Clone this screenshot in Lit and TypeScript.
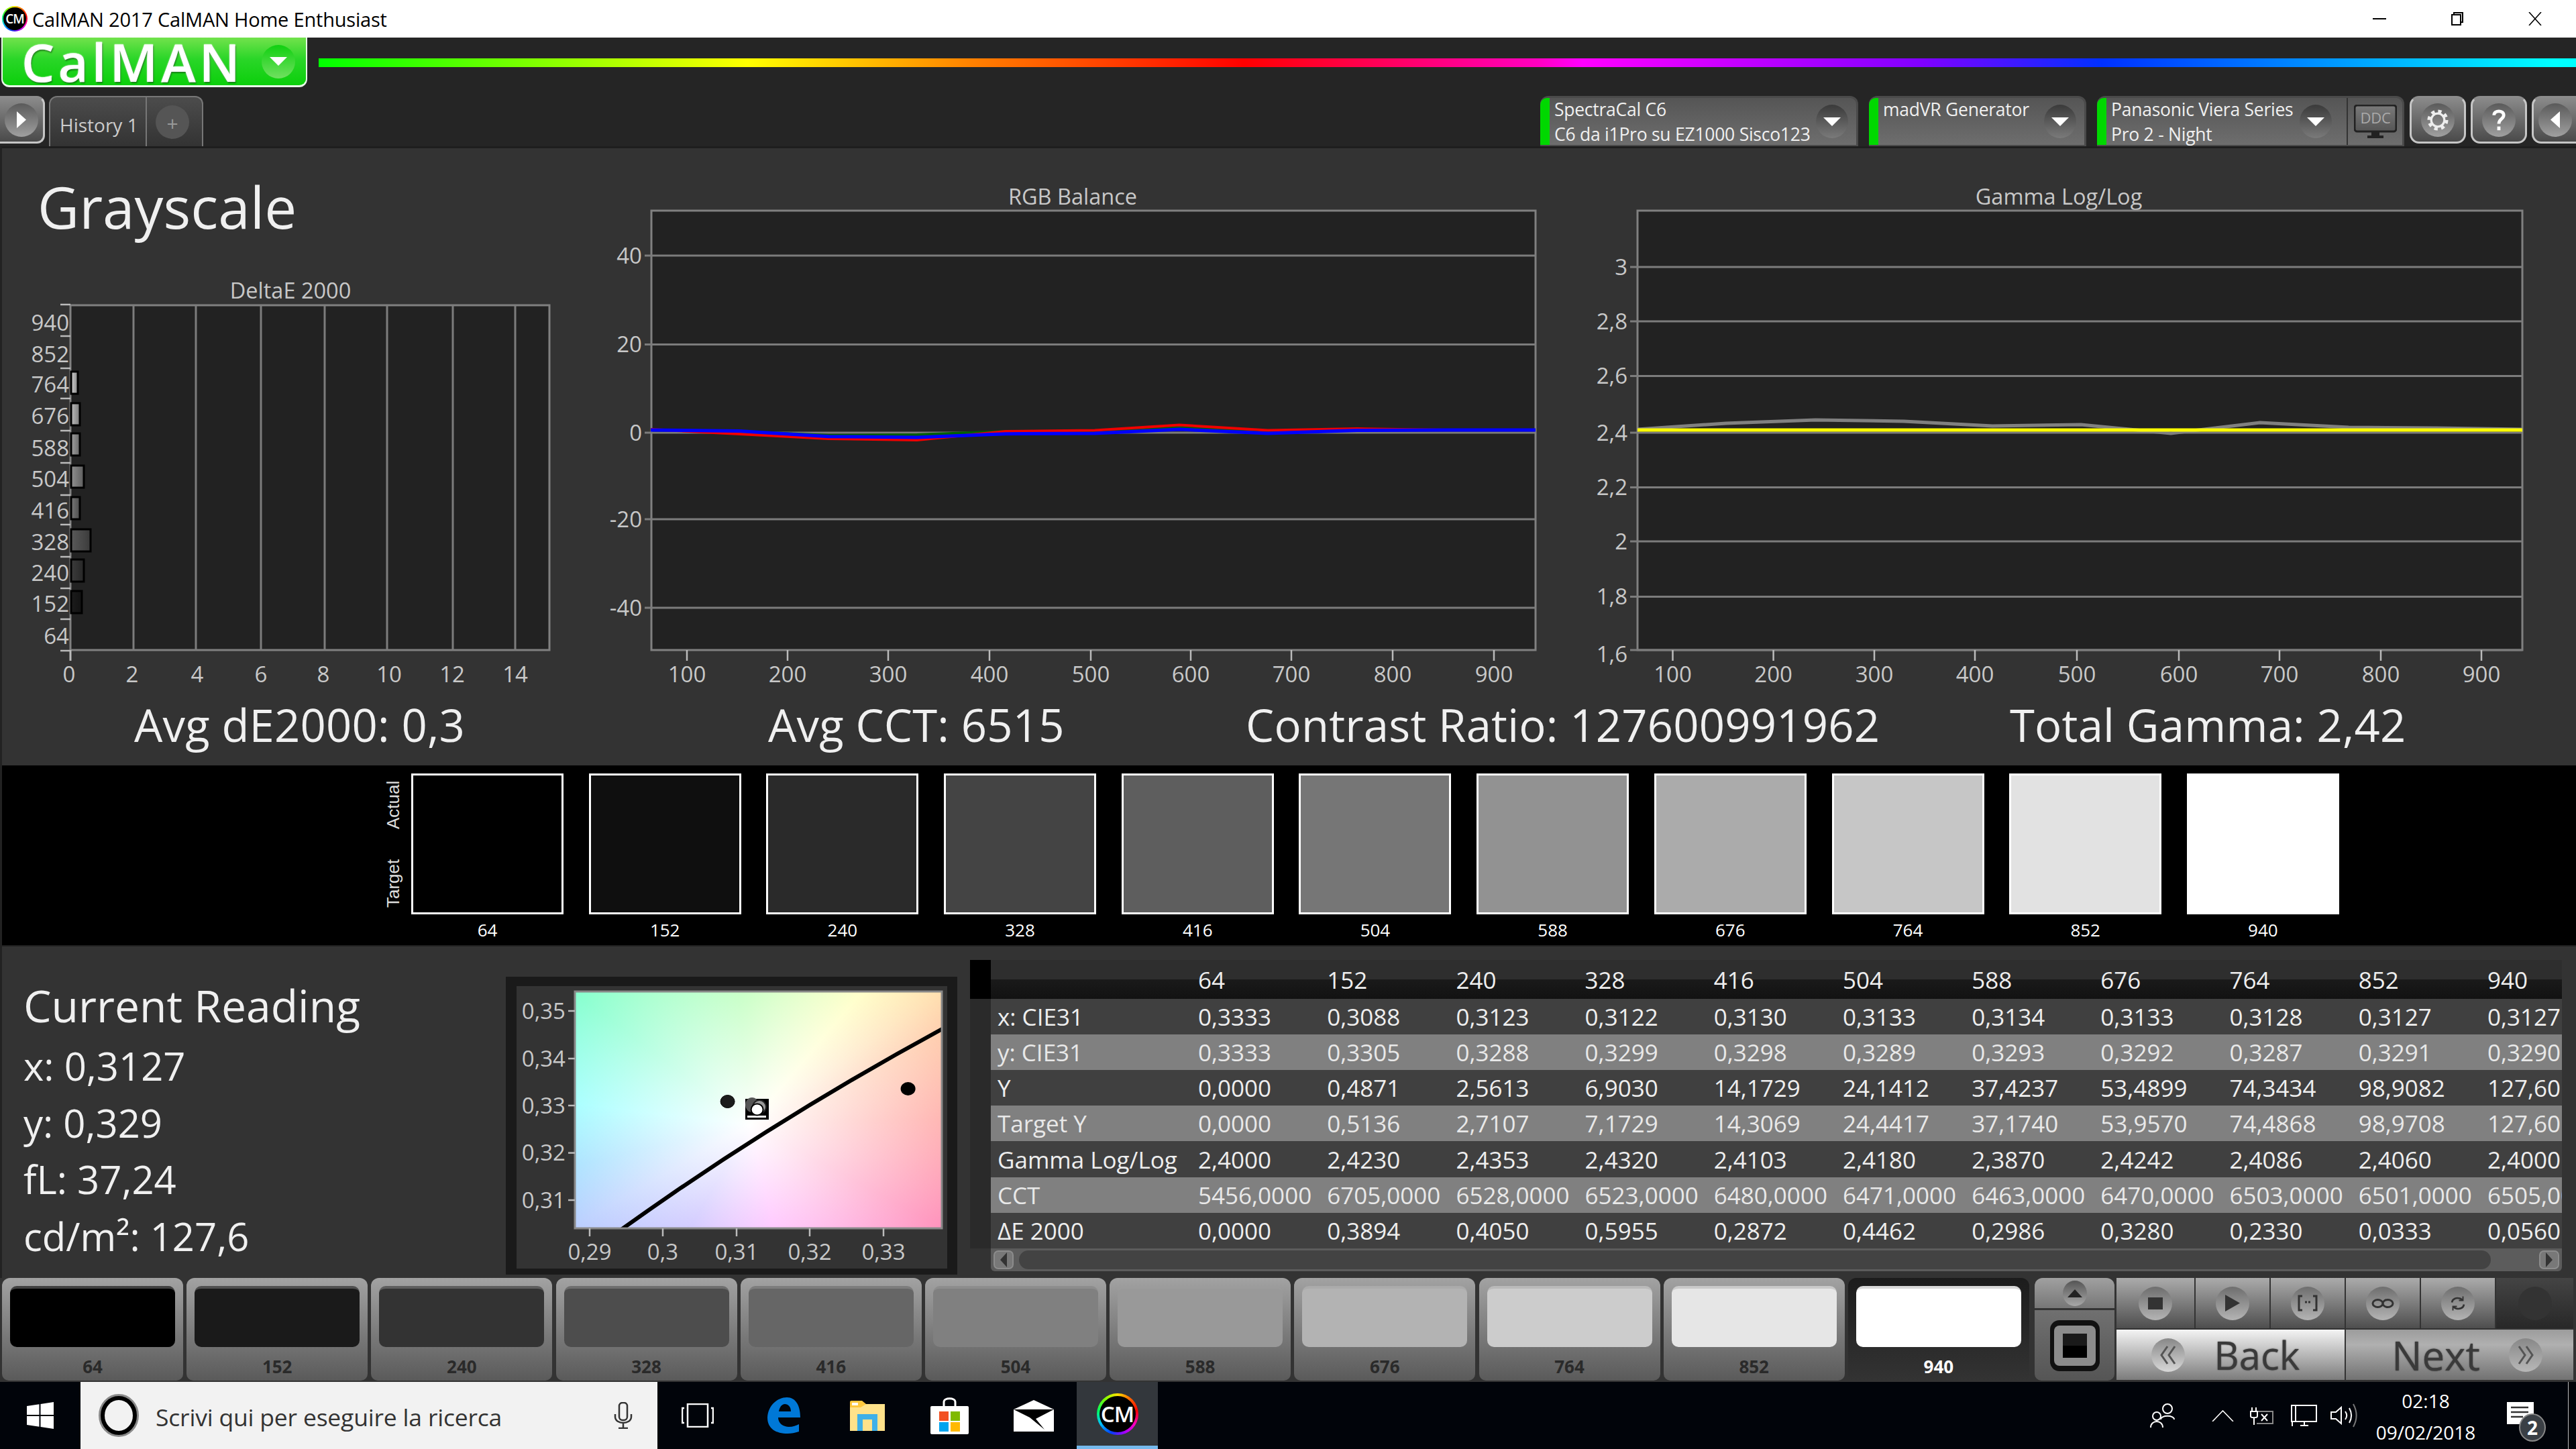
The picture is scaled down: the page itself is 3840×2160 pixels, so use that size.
import { LitElement, html, svg, css } from "lit";
import { customElement } from "lit/decorators.js";

const COLS = ["64","152","240","328","416","504","588","676","764","852","940"];
const SW_ACT = ["#000","#0f0f0f","#2a2a2a","#444","#5e5e5e","#767676","#929292","#ababab","#c6c6c6","#e2e2e2","#fff"];
const BTN_FILL = ["#000","#1a1a1a","#333","#4d4d4d","#666","#808080","#999","#b3b3b3","#ccc","#e6e6e6","#fff"];
const ROWS: [string, string[]][] = [
  ["x: CIE31",["0,3333","0,3088","0,3123","0,3122","0,3130","0,3133","0,3134","0,3133","0,3128","0,3127","0,3127"]],
  ["y: CIE31",["0,3333","0,3305","0,3288","0,3299","0,3298","0,3289","0,3293","0,3292","0,3287","0,3291","0,3290"]],
  ["Y",["0,0000","0,4871","2,5613","6,9030","14,1729","24,1412","37,4237","53,4899","74,3434","98,9082","127,60"]],
  ["Target Y",["0,0000","0,5136","2,7107","7,1729","14,3069","24,4417","37,1740","53,9570","74,4868","98,9708","127,60"]],
  ["Gamma Log/Log",["2,4000","2,4230","2,4353","2,4320","2,4103","2,4180","2,3870","2,4242","2,4086","2,4060","2,4000"]],
  ["CCT",["5456,0000","6705,0000","6528,0000","6523,0000","6480,0000","6471,0000","6463,0000","6470,0000","6503,0000","6501,0000","6505,0000"]],
  ["ΔE 2000",["0,0000","0,3894","0,4050","0,5955","0,2872","0,4462","0,2986","0,3280","0,2330","0,0333","0,0560"]],
];
const XS_BAL = [970,1102,1235,1367,1499,1632,1758,1890,2023,2155,2289];
const XS_GAM = [2441,2573,2706,2838,2970,3102,3236,3369,3501,3632,3760];
const poly = (xs:number[], ys:number[]) => xs.map((x,i)=>`${x},${ys[i]}`).join(" ");

const triDown = (w=26,h=13,c="#fff") => html`<svg class="ico" width=${w} height=${h} viewBox="0 0 26 13" preserveAspectRatio="none"><polygon points="0,0 26,0 13,13" fill=${c}/></svg>`;

@customElement("cm-logo")
class CmLogo extends LitElement {
  static styles = css`
    :host { display:flex; align-items:center; justify-content:center; width:var(--s,38px); height:var(--s,38px); border-radius:50%;
      background:conic-gradient(#ffe000,#ff6000,#ff0000,#ff00c0,#a000ff,#0040ff,#00c0ff,#00ff60,#80ff00,#ffe000); }
    .in { width:calc(100% - var(--r,4px)); height:calc(100% - var(--r,4px)); border-radius:50%; background:#000; color:#fff;
      display:flex; align-items:center; justify-content:center; font:600 var(--f,19px) "Open Sans",sans-serif; letter-spacing:-1px; }
  `;
  render(){ return html`<div class="in">CM</div>`; }
}

@customElement("app-root")
class AppRoot extends LitElement {
  static styles = css`
    :host { display:block; width:3840px; height:2160px; overflow:hidden; background:#252525; font-family:"Open Sans","Noto Sans",sans-serif; }
    * { box-sizing:border-box; }
    .ico { display:block; flex:none; }
    .page { display:flex; flex-direction:column; width:3840px; height:2160px; }

    .title { height:56px; background:#fff; display:flex; align-items:center; flex:none; padding-left:3px; color:#000; --s:38px; }
    .title .t { margin-left:7px; font-size:29px; letter-spacing:-.2px; white-space:nowrap; }
    .winctl { margin-left:auto; display:flex; align-items:center; gap:97px; padding-right:51px; }

    .head { height:162px; flex:none; background:#252525; display:flex; flex-direction:column; }
    .brandrow { display:flex; align-items:center; height:74px; padding-left:2px; }
    .brand { width:456px; height:74px; border:solid #e8f8e8; border-width:0 2px 3px 2px; border-radius:0 0 12px 12px;
      background:linear-gradient(#72e24c,#2ad628 45%,#0bcf0b); display:flex; align-items:center; padding-left:28px; }
    .brand .n { color:#fff; font-weight:600; font-size:78px; letter-spacing:5px; height:70px; line-height:70px; text-shadow:1px 2px 2px rgba(0,70,0,.6), 0 0 2px #fff; width:358px; flex:none; white-space:nowrap; }
    .brand .o { width:50px; height:50px; flex:none; border-radius:50%; background:linear-gradient(#10d010,#70e060); display:flex; align-items:center; justify-content:center; }
    .rainbow { margin-left:17px; flex:1; height:13px;
      background:linear-gradient(90deg,#00ff00 0,#ffff00 19%,#ff8000 29%,#ff0000 41%,#ff00c0 54%,#ff00ff 56%,#8000ff 71%,#0030ff 79%,#00a0ff 90%,#00ffff 99%); }
    .tabrow { display:flex; margin-top:13px; height:75px; }
    .sq { height:71px; border-radius:0 14px 14px 0; border:3px solid #c6c6c6; border-top-color:#8c8c8c; border-left:0;
      background:linear-gradient(#8a8a8a,#4a4a4a); display:flex; align-items:center; justify-content:center; flex:none; }
    .sq.playb { width:67px; border-radius:0 12px 12px 0; }
    .oval { width:50px; height:50px; border-radius:50%; flex:none; background:linear-gradient(#5a5a5a,#a0a0a0); display:flex; align-items:center; justify-content:center; }
    .hist { margin-left:6px; width:230px; height:75px; border-radius:12px 12px 0 0; border:2px solid #777; border-bottom:0;
      background:linear-gradient(#4c4c4c,#333); display:flex; align-items:center; color:#ccc; font-size:28px; }
    .hist .lab { width:144px; height:100%; padding-left:14px; border-right:2px solid #777; display:flex; align-items:center; padding-top:8px; white-space:nowrap; }
    .hist .plus { margin-left:13px; background:#555; color:#999; font-size:30px; line-height:1; padding-top:4px; }
    .devs { margin-left:auto; display:flex; }
    .dev { height:75px; border-radius:12px 12px 0 0; border:3px solid #4a4a4a; border-bottom:2px solid #4a4a4a; border-left:0; position:relative;
      background:linear-gradient(#555,#6e6e6e); color:#f0f0f0; display:flex; flex:none; font-size:26.5px; line-height:37px; white-space:nowrap; letter-spacing:-.25px; }
    .dev .g { width:14px; height:100%; background:#00d800; border-radius:10px 0 0 0; flex:none; margin-right:7px; }
    .dev .tx { flex:1; margin-top:-1px; min-width:0; }
    .dev .tx div { height:37px; }
    .dev .o2 { width:48px; height:50px; border-radius:50%; flex:none; margin-top:10px; background:linear-gradient(#3a3a3a,#7a7a7a); display:flex; align-items:center; justify-content:center; }
    .d1 { width:474px; } .d2 { width:324px; margin-left:16px; } .d3 { width:458px; margin-left:16px; }
    .d1 .o2 { margin-right:12px; } .d2 .o2 { margin-right:12px; }
    .d3 .o2 { margin-right:22px; }
    .ddc { width:83px; border-left:2px solid #333; display:flex; align-items:center; justify-content:center; height:100%; flex:none; }
    .rbtn { width:84px; height:71px; margin-left:7px; border-radius:14px; border:3px solid #c6c6c6; border-top-color:#8c8c8c; background:linear-gradient(#8a8a8a,#4a4a4a); display:flex; align-items:center; justify-content:center; flex:none; }
    .rbtn.first { margin-left:8px; }
    .rbtn.end { width:66px; border-right:0; border-radius:14px 0 0 14px; }

    .main { height:923px; flex:none; background:#333; border-top:3px solid #1e1e1e; border-left:3px solid #222; padding-top:5px; display:flex; flex-direction:column; }
    .charts { display:flex; height:824px; flex:none; }
    .col1 { width:897px; flex:none; display:flex; flex-direction:column; }
    h1 { margin:0; height:174px; font-weight:400; font-size:85.5px; line-height:1; color:#f0f0f0; padding:40px 0 0 53px; }
    svg text { font-family:"Open Sans","Noto Sans",sans-serif; }
    .lbl { font-size:33px; fill:#c8c8c8; dominant-baseline:central; transform:translateY(-1px); }
    .ttl { font-size:32.5px; fill:#c8c8c8; dominant-baseline:central; text-anchor:middle; transform:translateY(-2px); }
    .stats { display:grid; grid-template-columns:945px 712px 1139px 1fr; padding:0 0 0 197px; height:91px; color:#f0f0f0; font-size:67px; letter-spacing:.2px; line-height:60px; white-space:nowrap; }

    .strip { height:270px; flex:none; background:#000; border-left:3px solid #222; border-bottom:2px solid #222; display:flex; padding:12px 0 0 0; }
    .side { width:610px; flex:none; display:flex; justify-content:flex-end; padding-right:11px; height:210px; }
    .side .v { writing-mode:vertical-rl; transform:rotate(180deg); display:flex; justify-content:space-between; font:26px "Liberation Sans",sans-serif; color:#ddd; height:189px; margin-top:11px; }
    .sws { display:grid; grid-template-columns:repeat(11,227px); column-gap:37.7px; }
    .sw .b { height:210px; border:3px solid #fff; }
    .sw .l { text-align:center; color:#fff; font-size:26px; line-height:26px; margin-top:10px; }

    .low { height:494px; flex:none; background:#333; border-left:3px solid #222; display:flex; }
    .read { width:751px; flex:none; color:#f0f0f0; padding:42px 0 0 32px; }
    .read .h { font-size:66px; line-height:90px; height:90px; white-space:nowrap; }
    .read .m { font-size:58px; line-height:84.7px; height:84.7px; white-space:nowrap; }
    .read .h + .m { margin-top:4px; }
    .ciew { width:673px; flex:none; margin-top:45px; }
    .ciebg { width:547px; height:353px; background:
      radial-gradient(circle 345px at 261px 199px,#fff,rgba(255,255,255,0)),
      conic-gradient(from 0deg at 261px 199px,#a8ffa0 0deg,#ffffb8 40deg,#ffe0b0 55deg,#ffcaa8 64deg,#ffa8a4 88deg,#ff8cb8 118deg,#ff8aff 167deg,#aa9bff 210deg,#b0c8ff 240deg,#98dcff 257deg,#90ffff 277deg,#80ffcc 307deg,#a0ffa0 355deg,#a8ffa0 360deg); }
    .table { width:2373px; margin:20px 0 0 19px; flex:none; display:flex; flex-direction:column; overflow:hidden; }
    .r { display:grid; grid-template-columns:31px 309px repeat(11,192.2px); height:53px; align-items:center; color:#eee; font-size:35px; white-space:nowrap; flex:none; }
    .r .c0 { height:100%; background:#2a2a2a; }
    .r .nm { padding-left:10px; }
    .r.hd { height:58px; background:linear-gradient(#2e2e2e 0,#2e2e2e 50%,#1a1a1a 50%,#121212 100%); color:#eee; }
    .r.hd .c0 { background:#000; }
    .r.a { background:#404040; } .r.b { background:#808080; color:#e8e8e8; }
    .r.tall { height:54px; }
    .sb { margin-left:31px; height:34px; background:#5c5c5c; display:flex; align-items:center; padding:3px 4px; gap:8px; flex:none; border-radius:0 0 6px 6px; }
    .sb .ar { width:30px; height:28px; border-radius:7px; background:#787878; border:2px solid #8c8c8c; display:flex; align-items:center; justify-content:center; flex:none; }
    .sb .th { flex:none; width:2194px; height:28px; border-radius:14px; background:#434343; }
    .sb .ar.rt { margin-left:auto; }

    .btns { height:155px; flex:none; background:#333; display:flex; padding:0 0 2px 3px; gap:5.2px; }
    .bt { width:270px; height:153px; border-radius:12px 12px 10px 10px; background:linear-gradient(#a2a2a2,#5a5a5a); padding:12px 12px 0; display:flex; flex-direction:column; align-items:center; flex:none; }
    .bt .f { width:100%; height:91px; border-radius:10px; border-top:4px solid rgba(160,160,160,.4); }
    .bt .n { margin-top:14px; font-weight:700; font-size:26px; line-height:30px; color:#2a2a2a; }
    .bt.on { background:#1c1c1c linear-gradient(#1c1c1c,#333); }
    .bt.on .n { color:#fff; }
    .stack { width:119px; margin-left:3px; flex:none; display:flex; flex-direction:column; gap:3px; }
    .up { height:45px; background:linear-gradient(#a0a0a0,#777); border-radius:12px 12px 0 0; display:flex; align-items:center; justify-content:center; }
    .up .oval { width:36px; height:38px; background:linear-gradient(#555,#a8a8a8); }
    .sp { height:105px; background:linear-gradient(#707070,#555); display:flex; align-items:center; justify-content:center; border-radius:0 0 10px 10px; }
    .tr { flex:1; display:flex; flex-direction:column; margin-right:4px; margin-left:-2px; }
    .trtop { display:flex; height:75px; gap:2px; }
    .tc { flex:1; background:linear-gradient(#ababab,#4e4e4e); display:flex; align-items:center; justify-content:center; }
    .tc:first-child { flex:0 0 116px; } .tc:last-child { flex:0 0 115px; }
    .tc.off { background:linear-gradient(#444,#282828); }
    .tc.off .oval { background:#333; }
    .tc .oval { background:linear-gradient(#6e6e6e,#b4b4b4); }
    .nav { display:flex; height:75px; margin-top:2px; gap:2px; color:#3a3a3a; }
    .nb { display:flex; align-items:center; text-shadow:0 0 2px rgba(40,40,40,.8); white-space:nowrap; }
    .nb .oval { background:linear-gradient(#888,#d8d8d8); }
    .bk { width:340px; background:linear-gradient(#f4f4f4,#7c7c7c); padding-left:52px; font-size:58px; gap:43px; }
    .nx { flex:1; background:linear-gradient(#9c9c9c,#b0b0b0 30%,#727272); padding-left:68px; font-size:60px; }
    .nx .oval { margin-left:auto; margin-right:46px; background:linear-gradient(#888,#b8b8b8); }

    .task { height:100px; flex:none; background:#01040a; display:flex; align-items:center; color:#fff; }
    .st { width:120px; flex:none; display:flex; justify-content:center; }
    .search { width:860px; height:100%; background:#f2f2f2; display:flex; align-items:center; color:#333; font-size:35.5px; padding-left:27px; flex:none; }
    .search .t { margin-left:25px; margin-top:4px; white-space:nowrap; letter-spacing:-.2px; }
    .search .mic { margin-left:auto; margin-right:37px; }
    .apps { display:flex; align-items:center; height:100%; flex:none; }
    .cmt { width:121px; height:100%; background:#33373c; border-bottom:5px solid #76b9ed; display:flex; align-items:center; justify-content:center; --s:62px; --r:8px; --f:33px; }
    .tray { margin-left:auto; display:flex; align-items:center; height:100%; }
    .clock { width:190px; margin-left:7px; text-align:center; font-size:28px; line-height:47px; padding-top:4px; }
    .act { position:relative; width:91px; height:100%; display:flex; align-items:center; margin-left:26px; }
    .act .ico { margin-top:-7px; }
    .badge { position:absolute; left:18px; top:47px; width:40px; height:42px; border-radius:50%; background:#3a3f45; border:2px solid #888; font-weight:700; font-size:28px; display:flex; align-items:center; justify-content:center; }
    .lastbar { width:12px; height:100%; border-left:1px solid #bbb; }
  `;

  deltaChart() {
    const gx=[199,292,389,484,577,675,768];
    const xl: [string,number][]=[["0",103],["2",197],["4",294],["6",389],["8",482],["10",580],["12",674],["14",768]];
    const yl=["940","852","764","676","588","504","416","328","240","152","64"];
    const yc=[481,528,573,620,668,714,761,808,854,900,948];
    const ticks=[454,501,549,594,642,690,738,782,830,877,923,970];
    const bars:[number,number,string][]=[[570,10,"#d0d0d0"],[617,13,"#bdbdbd"],[662,13,"#a0a0a0"],[710,19,"#909090"],[757,13,"#777"],[805,29,"#5a5a5a"],[850,19,"#3c3c3c"],[897,16,"#1c1c1c"]];
    return html`<svg class="ico" width="897" height="650" viewBox="3 400 897 650">
      <defs><linearGradient id="bs" x1="0" x2="1" y1="0" y2="0"><stop offset="0" stop-color="#000" stop-opacity="0"/><stop offset="1" stop-color="#000" stop-opacity=".35"/></linearGradient></defs>
      <text class="ttl" x="433" y="434">DeltaE 2000</text>
      <rect x="105" y="455" width="714" height="514" fill="#222" stroke="#808080" stroke-width="3"/>
      ${gx.map(x=>svg`<line x1=${x} x2=${x} y1="455" y2="969" stroke="#7c7c7c" stroke-width="3"/>`)}
      ${ticks.map(y=>svg`<line x1="90" x2="105" y1=${y} y2=${y} stroke="#bbb" stroke-width="2.5"/>`)}
      <line x1="105" x2="105" y1="969" y2="985" stroke="#bbb" stroke-width="3"/>
      ${bars.map(([y,w,c])=>svg`<rect x="106" y=${y-16} width=${w} height="33" fill=${c} stroke="#000" stroke-width="3"/><rect x="106" y=${y-16} width=${w} height="33" fill="url(#bs)"/>`)}
      ${yl.map((t,i)=>svg`<text class="lbl" x="103" y=${yc[i]} text-anchor="end">${t}</text>`)}
      ${xl.map(([t,x])=>svg`<text class="lbl" x=${x} y="1005" text-anchor="middle">${t}</text>`)}
    </svg>`;
  }
  balChart() {
    const yy:[string,number][]=[["40",381],["20",513.5],["0",645],["-20",774],["-40",906]];
    const xx=[1024,1174,1324,1475,1626,1775,1925,2076,2227];
    return html`<svg class="ico" width="1450" height="824" viewBox="900 226 1450 824">
      <text class="ttl" x="1599" y="294">RGB Balance</text>
      <rect x="971" y="314" width="1318" height="655" fill="#222" stroke="#808080" stroke-width="3"/>
      ${yy.map(([t,y])=>svg`<line x1="961" x2="2289" y1=${y} y2=${y} stroke="#7c7c7c" stroke-width="3"/><text class="lbl" x="957" y=${y} text-anchor="end">${t}</text>`)}
      ${xx.map((x,i)=>svg`<line x1=${x} x2=${x} y1="969" y2="985" stroke="#bbb" stroke-width="2.5"/><text class="lbl" x=${x} y="1005" text-anchor="middle">${(i+1)*100}</text>`)}
      <polyline points=${poly(XS_BAL,[641,643,649,648,643,645,636,643,641,641,641])} fill="none" stroke="#006000" stroke-width="4"/>
      <polyline points=${poly(XS_BAL,[640,647,654,656,643,641.5,633.5,641.5,639,641,641])} fill="none" stroke="#f00000" stroke-width="4"/>
      <polyline points=${poly(XS_BAL,[641,642.6,650.7,652,646.7,646,640,646,641.5,641,641])} fill="none" stroke="#0000ff" stroke-width="5"/>
    </svg>`;
  }
  gamChart() {
    const yy:[string,number][]=[["3",398],["2,8",479],["2,6",560.6],["2,4",645],["2,2",726.5],["2",807],["1,8",889.5],["1,6",969]];
    const xx=[2493.5,2643.6,2794,2944,3096,3248,3398,3549,3699];
    return html`<svg class="ico" width="1490" height="824" viewBox="2350 226 1490 824">
      <text class="ttl" x="3069" y="294">Gamma Log/Log</text>
      <rect x="2441" y="314" width="1319" height="655" fill="#222" stroke="#808080" stroke-width="3"/>
      ${yy.map(([t,y])=>svg`<line x1="2430" x2="3760" y1=${y} y2=${y} stroke="#7c7c7c" stroke-width="3"/><text class="lbl" x="2426" y=${y===969?975:y} text-anchor="end">${t}</text>`)}
      ${xx.map((x,i)=>svg`<line x1=${x} x2=${x} y1="969" y2="985" stroke="#bbb" stroke-width="2.5"/><text class="lbl" x=${x} y="1005" text-anchor="middle">${(i+1)*100}</text>`)}
      <polyline points=${poly(XS_GAM,[640,631,626,628,635,633,646,630,637,638,640])} fill="none" stroke="#808080" stroke-width="5"/>
      <line x1="2441" x2="3760" y1="641" y2="641" stroke="#ffff00" stroke-width="5"/>
    </svg>`;
  }
  cieChart() {
    const yy:[string,number][]=[["0,35",1507],["0,34",1578],["0,33",1648],["0,32",1718.6],["0,31",1789]];
    const xx:[string,number][]=[["0,29",879],["0,3",988],["0,31",1098],["0,32",1207],["0,33",1317]];
    return html`<svg class="ico" width="673" height="444" viewBox="754 1456 673 444">
      <defs><clipPath id="pc"><rect x="857" y="1478" width="547" height="353"/></clipPath></defs>
      <rect x="754" y="1456" width="673" height="444" fill="#1a1a1a"/>
      <rect x="770" y="1470" width="642" height="421" fill="#333"/>
      <foreignObject x="857" y="1478" width="547" height="353"><div xmlns="http://www.w3.org/1999/xhtml" class="ciebg"></div></foreignObject>
      <g clip-path="url(#pc)">
        <path d="M926 1833Q1150 1672 1406 1533" fill="none" stroke="#000" stroke-width="6"/>
        <ellipse cx="1353.6" cy="1623" rx="11" ry="10" fill="#000"/>
        <ellipse cx="1084.6" cy="1642" rx="10.5" ry="9.5" fill="#1c1c1c" stroke="#000"/>
        <rect x="1111" y="1638" width="35" height="31" fill="#000"/>
        <rect x="1114" y="1663" width="28" height="3" fill="#fff"/>
        <ellipse cx="1121" cy="1647" rx="10" ry="11" fill="#555"/>
        <ellipse cx="1132" cy="1650" rx="10" ry="10" fill="#999" stroke="#222" stroke-width="2"/>
        <ellipse cx="1128.6" cy="1654" rx="9" ry="8.5" fill="#fff" stroke="#000" stroke-width="2"/>
      </g>
      <rect x="857" y="1478" width="547" height="353" fill="none" stroke="#888" stroke-width="3"/>
      ${yy.map(([t,y])=>svg`<line x1="847" x2="857" y1=${y} y2=${y} stroke="#bbb" stroke-width="2.5"/><text class="lbl" x="843" y=${y} text-anchor="end">${t}</text>`)}
      ${xx.map(([t,x])=>svg`<line x1=${x} x2=${x} y1="1831" y2="1843" stroke="#bbb" stroke-width="2.5"/><text class="lbl" x=${x} y="1866" text-anchor="middle">${t}</text>`)}
    </svg>`;
  }

  render() {
    return html`<div class="page">
      <div class="title">
        <cm-logo></cm-logo><div class="t">CalMAN 2017 CalMAN Home Enthusiast</div>
        <div class="winctl">
          <svg class="ico" width="20" height="20" viewBox="0 0 20 20"><rect x="0" y="9" width="20" height="2" fill="#000"/></svg>
          <svg class="ico" width="18" height="20" viewBox="0 0 18 20" fill="none" stroke="#000" stroke-width="2"><rect x="1" y="4" width="13" height="15"/><path d="M4 4V1H17V15H14"/></svg>
          <svg class="ico" width="20" height="20" viewBox="0 0 20 20" stroke="#000" stroke-width="1.6"><path d="M1 0 19 20M19 0 1 20"/></svg>
        </div>
      </div>
      <div class="head">
        <div class="brandrow">
          <div class="brand"><div class="n">CalMAN</div><div class="o">${triDown()}</div></div>
          <div class="rainbow"></div>
        </div>
        <div class="tabrow">
          <div class="sq playb"><div class="oval"><svg class="ico" width="14" height="25" viewBox="0 0 14 25"><polygon points="0,0 14,12.5 0,25" fill="#fff"/></svg></div></div>
          <div class="hist"><div class="lab">History 1</div><div class="oval plus">+</div></div>
          <div class="devs">
            <div class="dev d1"><div class="g"></div><div class="tx"><div>SpectraCal C6</div><div>C6 da i1Pro su EZ1000 Sisco123</div></div><div class="o2">${triDown()}</div></div>
            <div class="dev d2"><div class="g"></div><div class="tx"><div>madVR Generator</div></div><div class="o2">${triDown()}</div></div>
            <div class="dev d3"><div class="g"></div><div class="tx"><div>Panasonic Viera Series</div><div>Pro 2 - Night</div></div><div class="o2">${triDown()}</div>
              <div class="ddc"><svg class="ico" width="64" height="50" viewBox="0 0 64 50">
                <defs><linearGradient id="dg" x1="0" x2="0" y1="0" y2="1"><stop offset="0" stop-color="#7a7a7a"/><stop offset="1" stop-color="#555"/></linearGradient></defs>
                <rect x="1" y="1" width="62" height="39" rx="4" fill="url(#dg)" stroke="#222" stroke-width="3"/>
                <path d="M26 41h12v5h6v4H20v-4h6z" fill="#222"/>
                <text x="32" y="28" text-anchor="middle" font-size="22" fill="#aaa">DDC</text>
              </svg></div>
            </div>
            <div class="rbtn first"><div class="oval"><svg class="ico" width="36" height="36" viewBox="0 0 44 44" fill="none" stroke="#eee"><circle cx="22" cy="22" r="12" stroke-width="4"/><circle cx="22" cy="22" r="16" stroke-width="6" stroke-dasharray="6.3 6.27"/></svg></div></div>
            <div class="rbtn"><div class="oval"><svg class="ico" width="22" height="32" viewBox="0 0 24 40" fill="none" stroke="#fff" stroke-width="6"><path d="M3 11C3 1 21 1 21 11 21 18 12 18 12 27"/><rect x="9" y="32" width="6" height="7" fill="#fff" stroke="none"/></svg></div></div>
            <div class="rbtn end"><div class="oval"><svg class="ico" width="14" height="25" viewBox="0 0 14 25"><polygon points="14,0 0,12.5 14,25" fill="#fff"/></svg></div></div>
          </div>
        </div>
      </div>
      <div class="main">
        <div class="charts">
          <div class="col1"><h1>Grayscale</h1>${this.deltaChart()}</div>
          ${this.balChart()}
          ${this.gamChart()}
        </div>
        <div class="stats"><div>Avg dE2000: 0,3</div><div>Avg CCT: 6515</div><div>Contrast Ratio: 127600991962</div><div>Total Gamma: 2,42</div></div>
      </div>
      <div class="strip">
        <div class="side"><div class="v"><span>Target</span><span>Actual</span></div></div>
        <div class="sws">${COLS.map((c,i)=>html`<div class="sw"><div class="b" style="background:${SW_ACT[i]}"></div><div class="l">${c}</div></div>`)}</div>
      </div>
      <div class="low">
        <div class="read">
          <div class="h">Current Reading</div>
          <div class="m">x: 0,3127</div><div class="m">y: 0,329</div><div class="m">fL: 37,24</div><div class="m">cd/m²: 127,6</div>
        </div>
        <div class="ciew">${this.cieChart()}</div>
        <div class="table">
          <div class="r hd"><div class="c0"></div><div></div>${COLS.map(c=>html`<div class="v">${c}</div>`)}</div>
          ${ROWS.map(([n,v],i)=>html`<div class="r ${i%2?'b':'a'} ${i===4?'tall':''}"><div class="c0"></div><div class="nm">${n}</div>${v.map(x=>html`<div class="v">${x}</div>`)}</div>`)}
          <div class="sb">
            <div class="ar"><svg class="ico" width="10" height="22" viewBox="0 0 10 22"><polygon points="10,0 0,11 10,22" fill="#333"/></svg></div>
            <div class="th"></div>
            <div class="ar rt"><svg class="ico" width="10" height="22" viewBox="0 0 10 22"><polygon points="0,0 10,11 0,22" fill="#333"/></svg></div>
          </div>
        </div>
      </div>
      <div class="btns">
        ${COLS.map((c,i)=>html`<div class="bt ${i===10?'on':''}"><div class="f" style="background:${BTN_FILL[i]}"></div><div class="n">${c}</div></div>`)}
        <div class="stack">
          <div class="up"><div class="oval"><svg class="ico" width="22" height="12" viewBox="0 0 22 12"><polygon points="11,0 22,12 0,12" fill="#222"/></svg></div></div>
          <div class="sp"><svg class="ico" width="78" height="80" viewBox="0 0 78 80"><rect x="2" y="2" width="74" height="76" rx="14" fill="#111"/><rect x="8" y="10" width="62" height="60" rx="8" fill="#8c8c8c"/><rect x="21" y="22" width="36" height="36" fill="#1a1a1a"/><rect x="21" y="40" width="36" height="18" fill="#000"/></svg></div>
        </div>
        <div class="tr">
          <div class="trtop">
            <div class="tc"><div class="oval"><svg class="ico" width="22" height="18" viewBox="0 0 22 18"><rect width="22" height="18" fill="#333"/></svg></div></div>
            <div class="tc"><div class="oval"><svg class="ico" width="22" height="25" viewBox="0 0 22 25"><polygon points="0,0 22,12.5 0,25" fill="#333"/></svg></div></div>
            <div class="tc"><div class="oval"><svg class="ico" width="30" height="25" viewBox="0 0 30 25" fill="none" stroke="#333" stroke-width="3"><path d="M7 2H2V23H7M23 2H28V23H23"/><path d="M11 11h3M16 11h3"/></svg></div></div>
            <div class="tc"><div class="oval"><svg class="ico" width="34" height="14" viewBox="0 0 34 14" fill="none" stroke="#333" stroke-width="3"><ellipse cx="9.5" cy="7" rx="7.5" ry="5.5"/><ellipse cx="24.5" cy="7" rx="7.5" ry="5.5"/></svg></div></div>
            <div class="tc"><div class="oval"><svg class="ico" width="30" height="24" viewBox="0 0 30 32" fill="none" stroke="#333" stroke-width="3.5"><path d="M3 14C4 7 11 4 19 6L24 9"/><path d="M27 18C26 25 19 28 11 26L6 23"/><path d="M25 2V10H17M5 30V22H13" stroke-width="2.5"/></svg></div></div>
            <div class="tc off"><div class="oval"></div></div>
          </div>
          <div class="nav">
            <div class="nb bk"><div class="oval"><svg class="ico" width="26" height="28" viewBox="0 0 26 28" fill="none" stroke="#555" stroke-width="3"><path d="M12 1 3 14 12 27M23 1 14 14 23 27"/></svg></div>Back</div>
            <div class="nb nx">Next<div class="oval"><svg class="ico" width="26" height="28" viewBox="0 0 26 28" fill="none" stroke="#555" stroke-width="3"><path d="M3 1 12 14 3 27M14 1 23 14 14 27"/></svg></div></div>
          </div>
        </div>
      </div>
      <div class="task">
        <div class="st"><svg class="ico" width="40" height="40" viewBox="0 0 40 40" fill="#fff"><polygon points="0,6 18.5,3.3 18.5,19 0,19"/><polygon points="20.5,3 40,0 40,19 20.5,19"/><polygon points="0,21 18.5,21 18.5,36.7 0,34"/><polygon points="20.5,21 40,21 40,40 20.5,37"/></svg></div>
        <div class="search">
          <svg class="ico" width="60" height="64" viewBox="0 0 60 64" fill="none"><ellipse cx="30" cy="32" rx="28" ry="30" stroke="#8a8a8a" stroke-width="4"/><ellipse cx="30" cy="32" rx="24" ry="26" stroke="#000" stroke-width="6"/></svg>
          <div class="t">Scrivi qui per eseguire la ricerca</div>
          <svg class="mic ico" width="28" height="40" viewBox="0 0 28 40" fill="none" stroke="#333" stroke-width="2.5"><rect x="8" y="1" width="12" height="26" rx="5"/><path d="M2 18v4c0 12 24 12 24 0v-4M14 32v6M7 39h14"/></svg>
        </div>
        <div class="apps">
          <svg class="ico" style="margin-left:36px" width="48" height="36" viewBox="0 0 48 36" fill="none" stroke="#fff" stroke-width="2.5"><rect x="9" y="1" width="30" height="34"/><path d="M4 7H1V29H4M44 7H47V29H44"/></svg>
          <svg class="ico" style="margin-left:79px" width="50" height="54" viewBox="0 0 50 54"><path fill="#0078d7" fill-rule="evenodd" d="M1 30C2 12 16 0 30 0 43 0 50 12 50 30H17C17 39 25 44 33 44 39 44 44 42 48 40V51C42 53 37 54 31 54 14 54 1 47 1 30ZM18 21H36C36 14 32 10 27 10 22 10 19 15 18 21Z"/></svg>
          <svg class="ico" style="margin-left:74px" width="52" height="45" viewBox="0 0 52 45"><path fill="#ffe28a" d="M0 5H52V45H0Z"/><path fill="#ffc83d" d="M0 2Q0 0 2 0H18L24 5 16 10H0Z"/><rect x="3" y="3" width="9" height="4" fill="#fff"/><path fill="#3fb0e8" d="M11 20H41V45H33V28H19V45H11Z"/></svg>
          <svg class="ico" style="margin-left:68px" width="57" height="56" viewBox="0 0 57 56"><path d="M20 16V8C20 1 37 1 37 8V16" fill="none" stroke="#fff" stroke-width="3"/><rect x="0" y="14" width="57" height="42" rx="2" fill="#fff"/><rect x="13" y="22" width="14" height="14" fill="#f25022"/><rect x="30" y="22" width="14" height="14" fill="#7fba00"/><rect x="13" y="38" width="14" height="14" fill="#00a4ef"/><rect x="30" y="38" width="14" height="14" fill="#ffb900"/></svg>
          <svg class="ico" style="margin-left:67px;margin-right:34px" width="60" height="47" viewBox="0 0 60 47"><polygon points="0,14 30,0 60,14 60,47 0,47" fill="#fff"/><polygon points="0,14 60,14 33,28 46,44 24,26" fill="#000"/></svg>
          <div class="cmt"><cm-logo></cm-logo></div>
        </div>
        <div class="tray">
          <svg class="ico" width="38" height="36" viewBox="0 0 38 36" fill="none" stroke="#fff" stroke-width="2"><circle cx="26" cy="8" r="7"/><path d="M16 24C16 17 36 17 36 24"/><circle cx="10" cy="19" r="6"/><path d="M1 36C1 24 19 24 19 36"/></svg>
          <svg class="ico" style="margin-left:54px" width="33" height="17" viewBox="0 0 33 17" fill="none" stroke="#fff" stroke-width="1.6"><path d="M1 17 16.5 1 32 17"/></svg>
          <svg class="ico" style="margin-left:24px" width="39" height="28" viewBox="0 0 39 28" fill="none" stroke="#fff" stroke-width="2"><path d="M3 2v6M9 2v6M1 8H11V15C11 18 1 18 1 15ZM6 18V28"/><path d="M12 8H34V26H10" stroke="#888"/><path d="M17 12l9 10M26 12l-9 10"/></svg>
          <svg class="ico" style="margin-left:22px" width="39" height="32" viewBox="0 0 39 32" fill="none" stroke="#fff" stroke-width="2"><rect x="1" y="1" width="37" height="24"/><path d="M7 1V25M14 31H26M20 25V31M2 32V25"/></svg>
          <svg class="ico" style="margin-left:20px" width="40" height="36" viewBox="0 0 40 36" fill="none" stroke="#fff" stroke-width="2"><path d="M1 13H8L16 6V30L8 23H1Z"/><path d="M22 12C25 16 25 20 22 24M28 7C32 14 32 22 28 29"/><path d="M34 1C40 12 40 24 34 35" stroke="#777"/></svg>
          <div class="clock"><div>02:18</div><div>09/02/2018</div></div>
          <div class="act"><svg class="ico" width="40" height="33" viewBox="0 0 40 33"><rect width="40" height="33" fill="#fff"/><path d="M6 8H32M6 15H32M6 22H24" stroke="#333" stroke-width="2.5"/></svg><div class="badge">2</div></div>
          <div class="lastbar"></div>
        </div>
      </div>
    </div>`;
  }
}
